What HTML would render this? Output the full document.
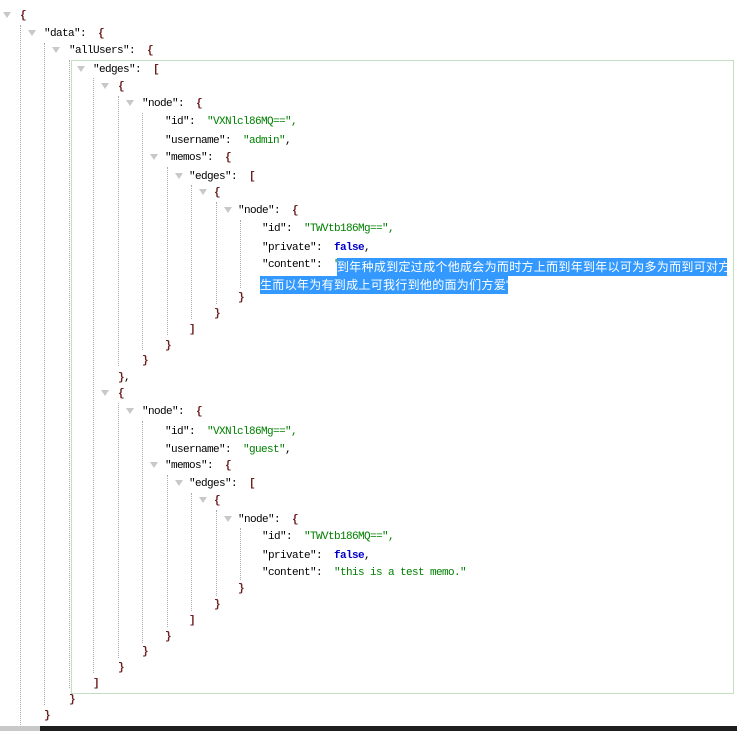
<!DOCTYPE html>
<html><head><meta charset="utf-8"><style>
body{margin:0;width:737px;height:731px;background:#fff;position:relative;overflow:hidden;font-family:"Liberation Mono",monospace;font-size:11px;letter-spacing:-0.6px;color:#000}
.l{position:absolute;height:16px;line-height:16px;white-space:nowrap}
.t{position:absolute;width:0;height:0;border-left:4px solid transparent;border-right:4px solid transparent;border-top:6px solid #c8c8c8;margin-top:-1px}
.s{color:#008000}.b{color:#0000cc;font-weight:bold}.k{color:#6b1f1f;font-weight:bold}
.d{position:absolute;border-left:1px dotted #aaa;width:0}
.sel{background:#3399ff;color:#fff;font-family:"Liberation Sans","Noto Sans CJK SC",sans-serif;font-size:12px;letter-spacing:0.3px;overflow:hidden}
</style></head><body>
<div style="position:absolute;left:71px;top:60px;width:661px;height:632px;border:1px solid #c4dfc4"></div>
<div class="d" style="left:20px;top:25px;height:702px"></div>
<div class="d" style="left:44px;top:43px;height:662px"></div>
<div class="d" style="left:69px;top:60px;height:628px"></div>
<div class="d" style="left:93px;top:78px;height:595px"></div>
<div class="d" style="left:118px;top:96px;height:270px"></div>
<div class="d" style="left:118px;top:403px;height:255px"></div>
<div class="d" style="left:142px;top:113px;height:237px"></div>
<div class="d" style="left:142px;top:421px;height:222px"></div>
<div class="d" style="left:167px;top:167px;height:168px"></div>
<div class="d" style="left:167px;top:475px;height:152px"></div>
<div class="d" style="left:191px;top:185px;height:134px"></div>
<div class="d" style="left:191px;top:493px;height:118px"></div>
<div class="d" style="left:216px;top:202px;height:102px"></div>
<div class="d" style="left:216px;top:510px;height:86px"></div>
<div class="d" style="left:240px;top:220px;height:68px"></div>
<div class="d" style="left:240px;top:528px;height:52px"></div>

<div class="t" style="left:3px;top:13px"></div><div class="l" style="left:20px;top:8px"><span class="k">{</span></div>
<div class="t" style="left:28px;top:31px"></div><div class="l" style="left:44px;top:26px">"data":&nbsp;&nbsp;<span class="k">{</span></div>
<div class="t" style="left:52px;top:48px"></div><div class="l" style="left:69px;top:43px">"allUsers":&nbsp;&nbsp;<span class="k">{</span></div>
<div class="t" style="left:77px;top:67px"></div><div class="l" style="left:93px;top:62px">"edges":&nbsp;&nbsp;<span class="k">[</span></div>
<div class="t" style="left:101px;top:84px"></div><div class="l" style="left:118px;top:79px"><span class="k">{</span></div>
<div class="t" style="left:126px;top:101px"></div><div class="l" style="left:142px;top:96px">"node":&nbsp;&nbsp;<span class="k">{</span></div>
<div class="l" style="left:165px;top:114px">"id":&nbsp;&nbsp;<span class="s">"VXNlcl86MQ==",</span></div>
<div class="l" style="left:165px;top:133px">"username":&nbsp;&nbsp;<span class="s">"admin"</span>,</div>
<div class="t" style="left:150px;top:155px"></div><div class="l" style="left:165px;top:150px">"memos":&nbsp;&nbsp;<span class="k">{</span></div>
<div class="t" style="left:175px;top:174px"></div><div class="l" style="left:189px;top:169px">"edges":&nbsp;&nbsp;<span class="k">[</span></div>
<div class="t" style="left:199px;top:190px"></div><div class="l" style="left:214px;top:185px"><span class="k">{</span></div>
<div class="t" style="left:224px;top:208px"></div><div class="l" style="left:238px;top:203px">"node":&nbsp;&nbsp;<span class="k">{</span></div>
<div class="l" style="left:262px;top:221px">"id":&nbsp;&nbsp;<span class="s">"TWVtb186Mg==",</span></div>
<div class="l" style="left:262px;top:240px">"private":&nbsp;&nbsp;<span class="b">false</span>,</div>
<div class="l" style="left:262px;top:257px">"content":&nbsp;&nbsp;<span class="s">"</span></div>
<div class="l sel" style="left:337px;top:258px;width:390px;height:18px;line-height:18px">到年种成到定过成个他成会为而时方上而到年到年以可为多为而到可对方</div>
<div class="l sel" style="left:260px;top:276px;width:248px;height:18px;line-height:18px">生而以年为有到成上可我行到他的面为们方爱"</div>
<div class="l" style="left:238px;top:290px"><span class="k">}</span></div>
<div class="l" style="left:214px;top:306px"><span class="k">}</span></div>
<div class="l" style="left:189px;top:322px"><span class="k">]</span></div>
<div class="l" style="left:165px;top:338px"><span class="k">}</span></div>
<div class="l" style="left:142px;top:353px"><span class="k">}</span></div>
<div class="l" style="left:118px;top:370px"><span class="k">}</span>,</div>
<div class="t" style="left:101px;top:391px"></div><div class="l" style="left:118px;top:386px"><span class="k">{</span></div>
<div class="t" style="left:126px;top:409px"></div><div class="l" style="left:142px;top:404px">"node":&nbsp;&nbsp;<span class="k">{</span></div>
<div class="l" style="left:165px;top:424px">"id":&nbsp;&nbsp;<span class="s">"VXNlcl86Mg==",</span></div>
<div class="l" style="left:165px;top:442px">"username":&nbsp;&nbsp;<span class="s">"guest"</span>,</div>
<div class="t" style="left:150px;top:463px"></div><div class="l" style="left:165px;top:458px">"memos":&nbsp;&nbsp;<span class="k">{</span></div>
<div class="t" style="left:175px;top:481px"></div><div class="l" style="left:189px;top:476px">"edges":&nbsp;&nbsp;<span class="k">[</span></div>
<div class="t" style="left:199px;top:498px"></div><div class="l" style="left:214px;top:493px"><span class="k">{</span></div>
<div class="t" style="left:224px;top:517px"></div><div class="l" style="left:238px;top:512px">"node":&nbsp;&nbsp;<span class="k">{</span></div>
<div class="l" style="left:262px;top:529px">"id":&nbsp;&nbsp;<span class="s">"TWVtb186MQ==",</span></div>
<div class="l" style="left:262px;top:548px">"private":&nbsp;&nbsp;<span class="b">false</span>,</div>
<div class="l" style="left:262px;top:565px">"content":&nbsp;&nbsp;<span class="s">"this is a test memo."</span></div>
<div class="l" style="left:238px;top:581px"><span class="k">}</span></div>
<div class="l" style="left:214px;top:597px"><span class="k">}</span></div>
<div class="l" style="left:189px;top:613px"><span class="k">]</span></div>
<div class="l" style="left:165px;top:629px"><span class="k">}</span></div>
<div class="l" style="left:142px;top:644px"><span class="k">}</span></div>
<div class="l" style="left:118px;top:660px"><span class="k">}</span></div>
<div class="l" style="left:93px;top:676px"><span class="k">]</span></div>
<div class="l" style="left:69px;top:692px"><span class="k">}</span></div>
<div class="l" style="left:44px;top:708px"><span class="k">}</span></div>

<div style="position:absolute;left:0;top:726px;width:40px;height:5px;background:#c8c8c8"></div>
<div style="position:absolute;left:40px;top:726px;width:697px;height:5px;background:#1e1e1e"></div>
</body></html>
